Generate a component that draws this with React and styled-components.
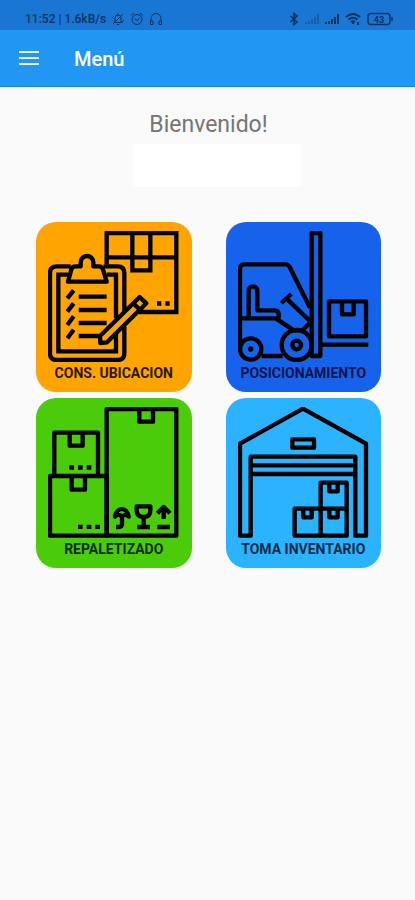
import React from 'react'
import styled, { createGlobalStyle } from 'styled-components'

const GlobalStyle = createGlobalStyle`
  * {
    box-sizing: border-box;
  }
  body {
    margin: 0;
    background: #fafafa;
    font-family: Roboto, "Liberation Sans", sans-serif;
  }
`

const StatusBar = styled.div`
  display: flex;
  align-items: center;
  justify-content: space-between;
  height: 30px;
  padding: 8px 22px 0 25px;
  background: #1976d2;
  color: #0c3263;
  font-size: 12px;
  line-height: 16px;
`

const StatusGroup = styled.div`
  display: flex;
  align-items: center;
  gap: ${({ $gap }) => $gap}px;
`

const StatusText = styled.span`
  white-space: pre;
  font-weight: 500;
`

const StatusIcon = styled.svg`
  display: block;
  fill: none;
  stroke: currentColor;
  stroke-width: ${({ $weight }) => $weight || 1}px;
  opacity: ${({ $faded }) => ($faded ? 0.35 : 1)};
`

const AppBar = styled.header`
  display: flex;
  align-items: center;
  gap: 30px;
  height: 57px;
  padding: 2px 14px 0;
  background: #2196f3;
  border-bottom: 1px solid #1f86dc;
  color: #fff;
`

const MenuButton = styled.button`
  display: flex;
  align-items: center;
  justify-content: center;
  width: 30px;
  height: 32px;
  padding: 0 0 2px;
  border: 0;
  background: none;
  color: #e6f3ff;
  cursor: pointer;
`

const Title = styled.h1`
  margin: 0;
  font-size: 20px;
  line-height: 24px;
  font-weight: 500;
`

const Content = styled.main`
  display: flex;
  flex-direction: column;
  align-items: center;
  padding: 24px 34px 32px 36px;
`

const Welcome = styled.p`
  margin: 0;
  color: #757575;
  font-size: 23px;
  line-height: 28px;
`

const UserName = styled.div`
  width: 168px;
  height: 43px;
  margin: 5px 0 35px 16px;
  background: #fff;
`

const Grid = styled.div`
  display: grid;
  grid-template-columns: 1fr 1fr;
  gap: 6px 34px;
  width: 100%;
`

const Card = styled.button`
  display: flex;
  flex-direction: column;
  align-items: center;
  height: 170px;
  padding: 9px 0 0;
  border: 0;
  border-radius: 20px;
  background: ${({ $color }) => $color};
  font-family: inherit;
  cursor: pointer;
`

const CardIcon = styled.svg`
  display: block;
  width: 131px;
  height: 131px;
  fill: none;
  stroke: #000;
  stroke-width: 13px;
  stroke-linejoin: round;
`

const CardLabel = styled.span`
  margin-top: 3px;
  color: ${({ $color }) => $color};
  font-size: 14px;
  line-height: 16px;
  font-weight: 700;
  white-space: nowrap;
`

const ClipboardIcon = () => (
  <CardIcon viewBox="54 48 393 393" aria-hidden="true">
    <path d="M230 148V54H439V291H326M230 127H439M307 54V166H361V54" strokeLinejoin="miter" />
    <path d="M381 259h13v13h-13zM406 259h13v13h-13z" fill="#000" stroke="none" />
    <path d="M122 154H80Q60 154 60 174V415Q60 435 80 435H263Q283 435 283 415V335M283 290V174Q283 154 263 154H221" />
    <path d="M114 179H85V409H258V355M258 310V179H230" strokeLinejoin="miter" />
    <path d="M114 200H230L219 163Q216 154 207 154H190V142A19 19 0 0 0 152 142V154H136Q127 154 124 163Z" />
    <path d="M146 245H230M146 285H230M146 324H230M146 363H206" />
    <path d="M112 250L131 226M112 290L131 265M112 330L131 304M112 370L131 344" />
    <path d="M210 363L329 246L349 265L231 382L211 384ZM310 265L329 284" />
  </CardIcon>
)

const ForkliftIcon = () => (
  <CardIcon viewBox="54 48 393 393" aria-hidden="true">
    <path d="M275 54H301V423H275Z" />
    <path d="M60 399V162Q60 148 74 148H196Q205 148 209 156L270 278M60 310H167L222 346H246L270 324" />
    <path d="M86 310V227A13 13 0 0 1 112 227V286H164Q176 286 176 298V310" />
    <path d="M184 264L214 237M199 250L270 318M125 423H188" />
    <circle cx="92" cy="402" r="32" />
    <circle cx="92" cy="402" r="8" fill="#000" stroke="none" />
    <circle cx="230" cy="390" r="45" />
    <circle cx="230" cy="390" r="13" />
    <path d="M327 259H438V364H327ZM366 259V298H401V259M306 389H445" />
  </CardIcon>
)

const BoxesIcon = () => (
  <CardIcon viewBox="54 48 393 393" aria-hidden="true">
    <path d="M230 54H439V434H230ZM328 54V92H369V54" />
    <path d="M73 255V125H204V255M119 125V164H158V125" />
    <path d="M60 255H230V434H60ZM125 255V296H165V255" />
    <path d="M118 223h14v13h-14zM144 223h14v13h-14zM170 223h14v13h-14zM144 401h14v13h-14zM170 401h14v13h-14zM196 401h14v13h-14z" fill="#000" stroke="none" />
    <path d="M255 377A21 29 0 0 1 296 377Q286 366 276 377Q265 366 255 377ZM276 374V399Q276 408 266 408H258" />
    <path d="M320 346H361V358Q361 378 341 378Q320 378 320 358ZM341 378V406M322 408H360" />
    <path d="M401 384V350M382 367L401 348L420 367M382 408H420" />
  </CardIcon>
)

const WarehouseIcon = () => (
  <CardIcon viewBox="54 48 393 393" aria-hidden="true">
    <path d="M60 434V158L249 53L438 158V434H406V197H92V434Z" />
    <path d="M217 145H282V170H217ZM92 223H406M92 249H406" />
    <path d="M302 353V275H380V353M224 353H380V434H224ZM302 353V434" />
    <path d="M328 275V301H353V275M250 353V379H275V353M328 353V379H353V353" />
  </CardIcon>
)

const cards = [
  { label: 'CONS. UBICACION', color: '#ffa400', text: '#2b1608', Icon: ClipboardIcon },
  { label: 'POSICIONAMIENTO', color: '#1662ea', text: '#081449', Icon: ForkliftIcon },
  { label: 'REPALETIZADO', color: '#4bcc0b', text: '#0b3008', Icon: BoxesIcon },
  { label: 'TOMA INVENTARIO', color: '#2cb3ff', text: '#082a48', Icon: WarehouseIcon },
]

const App = () => {
  return (
    <>
      <GlobalStyle />
      <StatusBar>
        <StatusGroup $gap={5}>
          <StatusText>11:52 | 1.6kB/s</StatusText>
          {/* muted bell */}
          <StatusIcon width="14" height="14" viewBox="0 0 14 14">
            <path d="M3 10.5H11L10 9V6A3 3 0 0 0 4 6V9ZM6 12.5H8M7 3V1.5M2 12L12 2M1 6L3 4M13 8L11 10" />
          </StatusIcon>
          {/* alarm clock */}
          <StatusIcon width="14" height="14" viewBox="0 0 14 14">
            <circle cx="7" cy="7.5" r="5" />
            <path d="M1 3.5L4 1M13 3.5L10 1M4.5 6.5L7 8.5L9.5 6.5" />
          </StatusIcon>
          {/* headphones */}
          <StatusIcon width="14" height="14" viewBox="0 0 14 14">
            <path d="M2 9V6.5A5 5 0 0 1 12 6.5V9M2 9H4V12.5H1.5V9M12 9H10V12.5H12.5V9" />
          </StatusIcon>
        </StatusGroup>
        <StatusGroup $gap={6}>
          <StatusIcon width="10" height="14" viewBox="0 0 10 14" $weight={1.5}>
            <path d="M1.5 4L8 10L5 12.5V1.5L8 4L1.5 10" />
          </StatusIcon>
          <StatusIcon width="14" height="12" viewBox="0 0 14 12" $weight={2} $faded>
            <path d="M1 11V9M4 11V8M7 11V6M10 11V4M13 11V1" />
          </StatusIcon>
          <StatusIcon width="14" height="12" viewBox="0 0 14 12" $weight={2}>
            <path d="M1 11V9M4 11V8M7 11V6M10 11V4M13 11V1" />
          </StatusIcon>
          <StatusIcon width="16" height="14" viewBox="0 0 16 14" $weight={2}>
            <path d="M1 5Q8 -1 15 5M3.5 7.5Q8 4 12.5 7.5M6 10Q8 8.5 10 10M8 10V12M13 10V13" />
          </StatusIcon>
          <StatusIcon width="26" height="14" viewBox="0 0 26 14" $weight={1.5}>
            <rect x="1" y="1.5" width="22" height="11" rx="3" />
            <path d="M25 5V9" />
            <text x="12" y="10.5" fontSize="9" fontWeight="700" textAnchor="middle" fill="currentColor" stroke="none">43</text>
          </StatusIcon>
        </StatusGroup>
      </StatusBar>
      <AppBar>
        <MenuButton aria-label="Abrir menú">
          <svg width="20" height="14" viewBox="0 0 20 14" fill="currentColor" aria-hidden="true">
            <path d="M0 0H20V2H0ZM0 6H20V8H0ZM0 12H20V14H0Z" />
          </svg>
        </MenuButton>
        <Title>Menú</Title>
      </AppBar>
      <Content>
        <Welcome>Bienvenido!</Welcome>
        <UserName />
        <Grid>
          {cards.map(({ label, color, text, Icon }) => (
            <Card key={label} $color={color}>
              <Icon />
              <CardLabel $color={text}>{label}</CardLabel>
            </Card>
          ))}
        </Grid>
      </Content>
    </>
  )
}

export default App
